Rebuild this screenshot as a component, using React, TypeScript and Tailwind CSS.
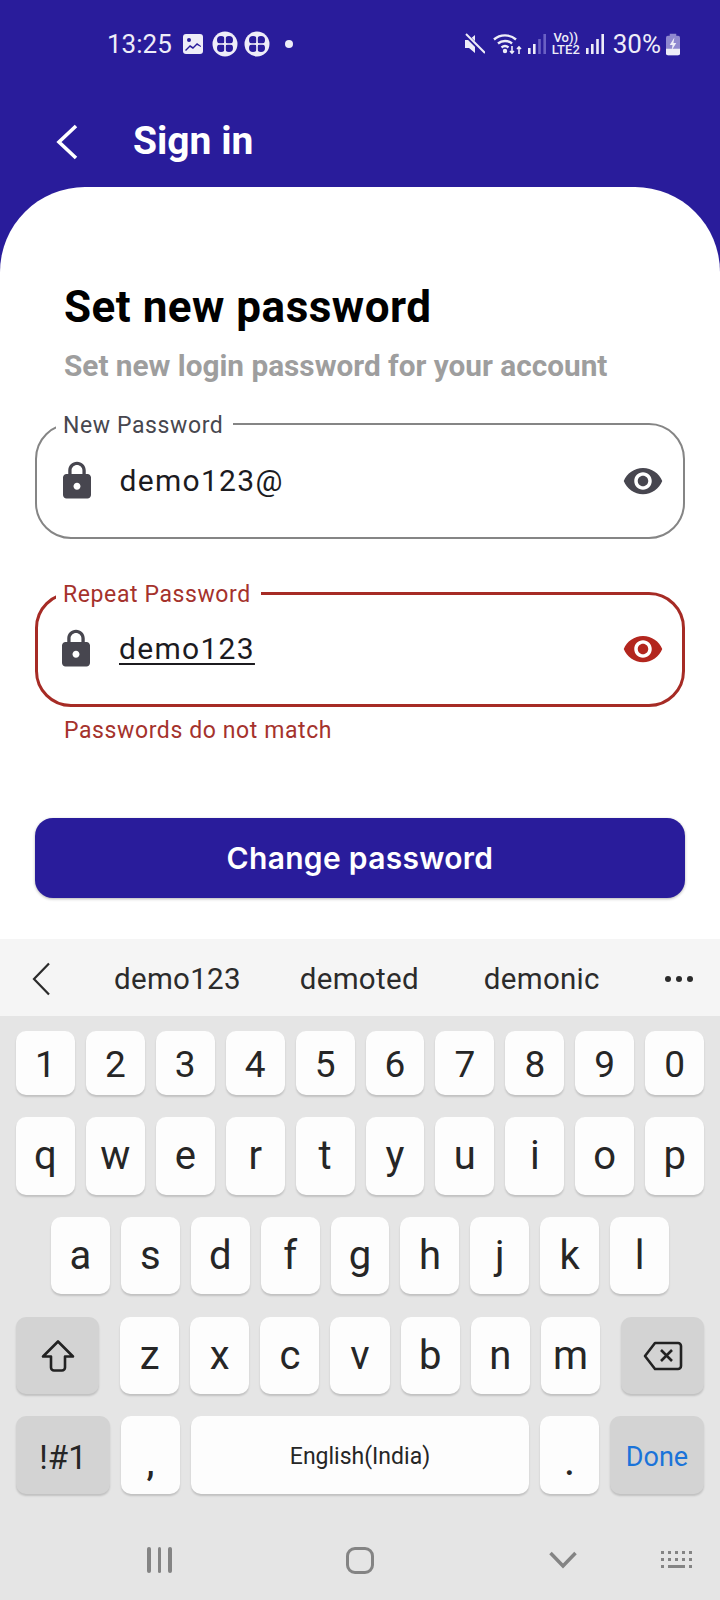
const lockPath =
  "M18 8h-1V6c0-2.76-2.24-5-5-5S7 3.24 7 6v2H6c-1.1 0-2 .9-2 2v10c0 1.1.9 2 2 2h12c1.1 0 2-.9 2-2V10c0-1.1-.9-2-2-2zm-6 9c-1.1 0-2-.9-2-2s.9-2 2-2 2 .9 2 2-.9 2-2 2zm3.1-9H8.9V6c0-1.71 1.39-3.1 3.1-3.1 1.71 0 3.1 1.39 3.1 3.1v2z";
const eyePath =
  "M12 4.5C7 4.5 2.73 7.61 1 12c1.73 4.39 6 7.5 11 7.5s9.27-3.11 11-7.5c-1.73-4.39-6-7.5-11-7.5zM12 17c-2.76 0-5-2.24-5-5s2.24-5 5-5 5 2.24 5 5-2.24 5-5 5zm0-8c-1.66 0-3 1.34-3 3s1.34 3 3 3 3-1.34 3-3-1.34-3-3-3z";

const Fan = () => (
  <svg width="26" height="26" viewBox="0 0 26 26">
    <circle cx="13" cy="13" r="12.5" fill="#eeedf8" />
    <g fill="#291c9b">
      <circle cx="9" cy="9" r="4" />
      <circle cx="17" cy="9" r="4" />
      <circle cx="9" cy="17" r="4" />
      <circle cx="17" cy="17" r="4" />
    </g>
    <path d="M12.2 4h1.6v18h-1.6zM4 12.2h18v1.6H4z" fill="#eeedf8" />
  </svg>
);

const Signal = ({ dim = false }) => (
  <svg width="18" height="21" viewBox="0 0 18 21">
    <rect x="0" y="14" width="2.6" height="6" fill="#eeedf8" />
    <rect x="5" y="10" width="2.6" height="10" fill="#eeedf8" />
    <rect x="10.2" y="5" width="2.6" height="15" fill={dim ? "#6a60c4" : "#eeedf8"} />
    <rect x="15.4" y="0" width="2.6" height="20" fill={dim ? "#6a60c4" : "#eeedf8"} />
  </svg>
);

function StatusBar() {
  return (
    <div className="h-[88px] pl-[107px] pr-[40px] flex items-center justify-between text-[#eeedf8]">
      <div className="flex items-center">
        <span className="text-[26px] leading-none">13:25</span>
        <svg className="ml-[11px]" width="20" height="20" viewBox="0 0 20 20">
          <rect width="20" height="20" rx="3" fill="#eeedf8" />
          <circle cx="6" cy="6" r="2" fill="#291c9b" />
          <path d="M2 16l5-5 3 2 4-4 4 3v1l-4-2-4 4-3-2-4 4z" fill="#291c9b" />
        </svg>
        <span className="ml-[9px] flex gap-[6px]">
          <Fan />
          <Fan />
        </span>
        <span className="ml-[15px] w-[8px] h-[8px] rounded-full bg-[#eeedf8]" />
      </div>
      <div className="flex items-center">
        <svg width="21" height="22" viewBox="0 0 21 22">
          <path d="M1 7h4l6-5v18l-6-5H1z" fill="#eeedf8" />
          <path d="M2 2l18 18" stroke="#291c9b" strokeWidth="4" />
          <path d="M2 1l19 19" stroke="#eeedf8" strokeWidth="2" />
        </svg>
        <svg className="ml-[8px]" width="30" height="24" viewBox="0 0 30 24" fill="none" stroke="#eeedf8" strokeWidth="2.4">
          <path d="M1 7.5C7 2 17 2 23 7.5" />
          <path d="M5 11.5c4-3.4 10-3.4 14 0" />
          <path d="M8.5 15.5c2-1.6 5-1.6 7 0" />
          <circle cx="12" cy="19" r="1" fill="#eeedf8" />
          <path d="M19 14v7m-2-2l2 2 2-2M26 22v-7m-2 2l2-2 2 2" strokeWidth="1.6" />
        </svg>
        <span className="ml-[5px]">
          <Signal dim />
        </span>
        <span className="ml-[7px] w-[26px] flex flex-col items-center text-[13px] leading-[12px] font-medium">
          <span>Vo))</span>
          <span>LTE2</span>
        </span>
        <span className="ml-[7px]">
          <Signal />
        </span>
        <span className="ml-[9px] text-[26px] leading-none">30%</span>
        <svg className="ml-[5px]" width="14" height="23" viewBox="0 0 15 23">
          <rect x="4" y="0" width="7" height="3" fill="#8f88cf" />
          <rect x="0" y="2" width="15" height="21" rx="2" fill="#8f88cf" />
          <path d="M0 16h15v5a2 2 0 0 1-2 2H2a2 2 0 0 1-2-2z" fill="#eeedf8" />
          <path d="M9 4l-5 8h3l-1 6 5-8H8z" fill="#eeedf8" />
        </svg>
      </div>
    </div>
  );
}

function Field({ label, value, error = false }: { label: string; value: string; error?: boolean }) {
  return (
    <fieldset
      className={
        error
          ? "rounded-[36px] border-[3px] border-[#a62b25]"
          : "rounded-[36px] border-[2px] border-[#858585]"
      }
    >
      <legend
        className={
          error
            ? "ml-[18px] pl-[7px] pr-[10px] pt-[3px] text-[23px] leading-[26px] tracking-[0.6px] text-[#a5322c]"
            : "ml-[19px] pl-[7px] pr-[10px] pt-[3px] text-[23px] leading-[26px] tracking-[0.6px] text-[#47474f]"
        }
      >
        {label}
      </legend>
      <div
        className={
          error
            ? "-mt-[14.5px] h-[111px] pl-[17px] pr-[18px] flex items-center"
            : "-mt-[14.5px] h-[113px] pl-[18.5px] pr-[19px] flex items-center"
        }
      >
        <svg width="42" height="42" viewBox="0 0 24 24" fill="#47464f">
          <path d={lockPath} />
        </svg>
        <span
          className={
            error
              ? "ml-[22px] text-[30px] tracking-[1.3px] text-[#1c1b1f] underline underline-offset-[4px] decoration-[1.5px]"
              : "ml-[22px] text-[30px] tracking-[1.3px] text-[#1c1b1f]"
          }
        >
          {value}
        </span>
        <svg className="ml-auto" width="42" height="42" viewBox="0 0 24 24" fill={error ? "#b3261e" : "#47464f"}>
          <path d={eyePath} />
        </svg>
      </div>
    </fieldset>
  );
}

function Key({ children, className = "" }: { children: React.ReactNode; className?: string }) {
  return (
    <div
      className={
        "flex items-center justify-center rounded-[10px] shadow-[0_2px_2px_rgba(0,0,0,0.16)] text-[#262626] " +
        className
      }
    >
      {children}
    </div>
  );
}

const LetterRow = ({ keys }: { keys: string[] }) => (
  <>
    {keys.map((k) => (
      <Key key={k} className="flex-1 bg-[#fdfdfd] text-[40px] leading-none">
        {k}
      </Key>
    ))}
  </>
);

function Keyboard() {
  return (
    <div className="h-[661px] bg-[#e5e5e5] flex flex-col">
      <div className="h-[77px] pt-[3px] bg-[#f5f5f5] flex items-center text-[#2b2b2b] text-[29.5px] tracking-[0.3px]">
        <svg className="ml-[32px]" width="20" height="34" viewBox="0 0 20 34" fill="none" stroke="#2b2b2b" strokeWidth="2.2">
          <path d="M17 1.5L2 17l15 15.5" />
        </svg>
        <span className="ml-[62px]">demo123</span>
        <span className="ml-[59px]">demoted</span>
        <span className="ml-[65px]">demonic</span>
        <span className="ml-[65px] flex gap-[5px]">
          <i className="w-[6px] h-[6px] rounded-full bg-[#2b2b2b]" />
          <i className="w-[6px] h-[6px] rounded-full bg-[#2b2b2b]" />
          <i className="w-[6px] h-[6px] rounded-full bg-[#2b2b2b]" />
        </span>
      </div>

      <div className="h-[64px] mt-[15px] px-[16px] flex gap-[11px]">
        {["1", "2", "3", "4", "5", "6", "7", "8", "9", "0"].map((k) => (
          <Key key={k} className="flex-1 pt-[2px] bg-[#fdfdfd] text-[37px] leading-none">
            {k}
          </Key>
        ))}
      </div>
      <div className="h-[78px] mt-[22px] px-[16px] flex gap-[11px]">
        <LetterRow keys={["q", "w", "e", "r", "t", "y", "u", "i", "o", "p"]} />
      </div>
      <div className="h-[77px] mt-[22px] px-[51px] flex gap-[11px]">
        <LetterRow keys={["a", "s", "d", "f", "g", "h", "j", "k", "l"]} />
      </div>
      <div className="h-[77px] mt-[23px] px-[16px] flex">
        <Key className="w-[83px] bg-[#d3d3d3]">
          <svg width="34" height="34" viewBox="0 0 34 34" fill="none" stroke="#222222" strokeWidth="2.6" strokeLinejoin="round">
            <path d="M17 2.5L2 17.5h8v11a3 3 0 0 0 3 3h8a3 3 0 0 0 3-3v-11h8z" />
          </svg>
        </Key>
        <div className="flex-1 mx-[21px] flex gap-[11px]">
          <LetterRow keys={["z", "x", "c", "v", "b", "n", "m"]} />
        </div>
        <Key className="w-[83px] bg-[#d3d3d3]">
          <svg width="40" height="30" viewBox="0 0 40 30" fill="none" stroke="#222222" strokeWidth="2.6" strokeLinejoin="round">
            <path d="M12 2h23a3 3 0 0 1 3 3v20a3 3 0 0 1-3 3H12L2 15z" />
            <path d="M18 9l11 11M29 9L18 20" />
          </svg>
        </Key>
      </div>
      <div className="h-[78px] mt-[22px] px-[16px] flex">
        <Key className="w-[94px] pt-[4px] bg-[#d3d3d3] text-[33px] leading-none">!#1</Key>
        <Key className="w-[59px] ml-[11px] pt-[16px] bg-[#fdfdfd] text-[36px] font-medium leading-none">,</Key>
        <Key className="flex-1 mx-[11px] pt-[4px] bg-[#fdfdfd] text-[23px]">English(India)</Key>
        <Key className="w-[59px] pt-[16px] bg-[#fdfdfd] text-[36px] font-medium leading-none">.</Key>
        <Key className="w-[94px] ml-[11px] pt-[4px] bg-[#d3d3d3] !text-[#1a73d9] text-[27px]">Done</Key>
      </div>

      <div className="flex-1 flex items-center pl-[147px] pt-[26px]">
        <span className="flex gap-[7px]">
          <i className="w-[3.5px] h-[26px] rounded-sm bg-[#848484]" />
          <i className="w-[3.5px] h-[26px] rounded-sm bg-[#848484]" />
          <i className="w-[3.5px] h-[26px] rounded-sm bg-[#848484]" />
        </span>
        <span className="ml-[174px] w-[28px] h-[27px] rounded-[9px] border-[3.5px] border-[#848484]" />
        <svg className="ml-[175px]" width="28" height="18" viewBox="0 0 28 18" fill="none" stroke="#848484" strokeWidth="3.5">
          <path d="M1.5 2L14 15 26.5 2" />
        </svg>
        <svg className="ml-[83px]" width="33" height="20" viewBox="0 0 33 20" fill="#848484">
          <path d="M1 1h3v3H1zM8 1h3v3H8zM15 1h3v3h-3zM22 1h3v3h-3zM29 1h3v3h-3zM1 8h3v3H1zM8 8h3v3H8zM15 8h3v3h-3zM22 8h3v3h-3zM29 8h3v3h-3zM1 15h3v3H1zM8 15h17v3H8zM29 15h3v3h-3z" />
        </svg>
      </div>
    </div>
  );
}

export default function App() {
  return (
    <div className="w-[720px] h-[1600px] overflow-hidden flex flex-col bg-[#291c9b] font-['Roboto',sans-serif]">
      <StatusBar />
      <div className="h-[99px] flex items-center pl-[55px] pt-[8px] text-white">
        <svg width="24" height="36" viewBox="0 0 24 36" fill="none" stroke="white" strokeWidth="3.6">
          <path d="M21 2L4 18l17 16" />
        </svg>
        <h1 className="ml-[54px] text-[39px] font-bold leading-none">Sign in</h1>
      </div>

      <div className="h-[752px] bg-white rounded-t-[85px] px-[35px] flex flex-col">
        <h2 className="mt-[91px] ml-[29px] text-[44px] leading-[58px] font-bold text-black tracking-[0.5px]">
          Set new password
        </h2>
        <p className="mt-[12px] ml-[29px] text-[29.75px] leading-[36px] font-bold text-[#9e9e9e]">
          Set new login password for your account
        </p>
        <div className="mt-[25.5px]">
          <Field label="New Password" value="demo123@" />
        </div>
        <div className="mt-[39.5px]">
          <Field label="Repeat Password" value="demo123" error />
        </div>
        <p className="mt-[10px] ml-[29px] text-[23px] leading-[28px] tracking-[0.6px] text-[#a5322c]">
          Passwords do not match
        </p>
        <button className="mt-[73px] h-[80px] rounded-[18px] bg-[#291c9b] text-white text-[30px] font-semibold tracking-[0.3px] font-['Inter',sans-serif] shadow-[0_1px_3px_rgba(0,0,0,0.3)]">
          Change password
        </button>
      </div>
      <Keyboard />
    </div>
  );
}
